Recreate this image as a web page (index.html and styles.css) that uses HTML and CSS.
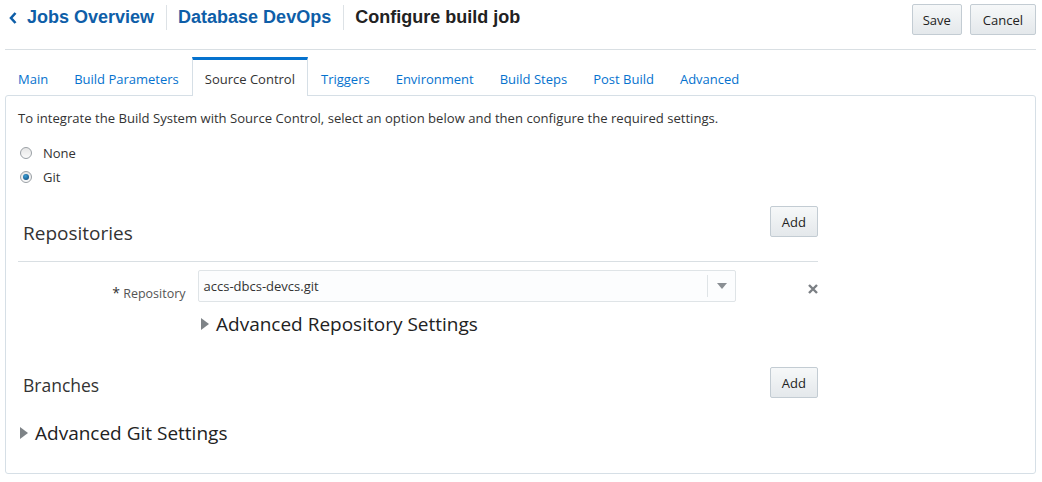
FILE: index.html
```html
<!DOCTYPE html>
<html>
<head>
<meta charset="utf-8">
<link rel="stylesheet" href="styles.css">
</head>
<body>
<div class="page">
  <header class="header">
    <nav class="crumbs">
      <a class="crumb link"><svg class="chev" width="10" height="14" viewBox="0 0 10 14"><path d="M7.5 2 L3 7 L7.5 12" fill="none" stroke="#0e5ea8" stroke-width="2.6"/></svg>Jobs Overview</a>
      <span class="sep"></span>
      <a class="crumb link">Database DevOps</a>
      <span class="sep"></span>
      <span class="crumb current">Configure build job</span>
    </nav>
    <div class="actions">
      <button class="btn save">Save</button>
      <button class="btn cancel">Cancel</button>
    </div>
  </header>

  <ul class="tabs">
    <li class="tab">Main</li>
    <li class="tab">Build Parameters</li>
    <li class="tab active">Source Control</li>
    <li class="tab">Triggers</li>
    <li class="tab">Environment</li>
    <li class="tab">Build Steps</li>
    <li class="tab">Post Build</li>
    <li class="tab">Advanced</li>
  </ul>

  <section class="panel">
    <p class="intro">To integrate the Build System with Source Control, select an option below and then configure the required settings.</p>
    <div class="radios">
      <label class="radio"><span class="dot"></span>None</label>
      <label class="radio"><span class="dot on"></span>Git</label>
    </div>

    <div class="section">
      <div class="section-head ruled">
        <h2 class="h-big">Repositories</h2>
        <button class="btn">Add</button>
      </div>
      <div class="repo-row">
        <label class="field-label"><span class="req">*</span> Repository</label>
        <div class="select">
          <span class="select-val">accs-dbcs-devcs.git</span>
          <span class="select-btn"><svg width="10" height="6" viewBox="0 0 10 6"><path d="M0 0 H10 L5 6 Z" fill="#8a8f94"/></svg></span>
        </div>
        <span class="remove"><svg width="10" height="10" viewBox="0 0 10 10"><path d="M1 1 L9 9 M9 1 L1 9" stroke="#7b7f84" stroke-width="2.4"/></svg></span>
      </div>
      <div class="disclosure indent"><span class="tri"></span>Advanced Repository Settings</div>
    </div>

    <div class="section">
      <div class="section-head branches">
        <h2 class="h-mid">Branches</h2>
        <button class="btn">Add</button>
      </div>
    </div>
    <div class="disclosure git"><span class="tri"></span>Advanced Git Settings</div>
  </section>
</div>
</body>
</html>
```

FILE: styles.css
```css
* { box-sizing: border-box; }
body {
  margin: 0;
  background: #fff;
  font-family: "Open Sans", "Noto Sans", sans-serif;
  color: #333;
}
.page { padding: 0 6px 0 5px; }

.header {
  display: flex;
  justify-content: space-between;
  align-items: flex-start;
  height: 50px;
  border-bottom: 1px solid #d9dfe3;
}
.crumbs {
  display: flex;
  align-items: center;
  height: 35px;
  padding-left: 3px;
  font-family: "Liberation Sans", Arial, sans-serif;
  font-weight: bold;
  font-size: 18px;
}
.crumb { display: flex; align-items: center; }
.link { color: #0e5ea8; }
.current { color: #222; }
.chev { margin-right: 9px; }
.sep {
  width: 1px;
  height: 25px;
  background: #dde2e6;
  margin: 0 11px 0 12px;
}
.actions { display: flex; gap: 8px; padding-top: 4px; }

.btn {
  font-family: "Open Sans", "Noto Sans", sans-serif;
  font-size: 13px;
  color: #222;
  height: 31px;
  padding: 0 11px;
  border: 1px solid #c3ccd3;
  border-radius: 2px;
  background: linear-gradient(#f6f8f9, #e4e8eb);
}
.btn.save { padding: 0 10px; }
.btn.cancel { padding: 0 12px; }

.tabs {
  list-style: none;
  margin: 7px 0 -1px 0;
  padding: 0;
  display: flex;
  position: relative;
  z-index: 1;
}
.tab {
  font-size: 13px;
  color: #0572ce;
  padding: 0 12px;
  height: 39px;
  line-height: 39px;
  border: 1px solid transparent;
  border-top: 3px solid transparent;
  border-bottom: none;
}
.tab.active {
  color: #333;
  background: #fff;
  border-color: #d6dfe6;
  border-top-color: #0572ce;
}

.panel {
  border: 1px solid #d6dfe6;
  border-radius: 3px;
  height: 379px;
  padding: 12px 12px;
}
.intro { margin: 0; font-size: 13.1px; line-height: 20px; color: #333; }
.radios { display: flex; flex-direction: column; gap: 6px; margin-top: 16px; }
.radio { display: flex; align-items: center; font-size: 13px; height: 18px; }
.dot {
  width: 12px; height: 12px;
  border-radius: 50%;
  border: 1px solid #9aa0a5;
  background: linear-gradient(#e6e6e6, #fafafa);
  margin: 0 11px 0 2px;
  display: inline-flex; align-items: center; justify-content: center;
}
.dot.on::after {
  content: "";
  width: 6px; height: 6px; border-radius: 50%;
  background: radial-gradient(circle at 40% 35%, #3ca0d8, #0a3f6e);
}

.section { width: 800px; }
.section-head {
  display: flex;
  justify-content: space-between;
  align-items: center;
  margin-top: 20px;
}
.section-head.ruled {
  align-items: flex-start;
  height: 56px;
  border-bottom: 1px solid #d9dfe3;
}
.section-head.ruled .h-big { margin-top: 14px; }
.section-head.branches { margin-top: 30px; align-items: flex-start; }
.section-head.branches .h-mid { margin-top: 6px; }
.h-big { margin: 0 0 0 5px; font-size: 19px; font-weight: normal; color: #333; }
.h-mid { margin: 0 0 0 5px; font-size: 17.5px; font-weight: normal; color: #333; }

.repo-row { display: flex; align-items: center; margin-top: 8px; height: 32px; }
.field-label {
  width: 168px; text-align: right; font-size: 12.5px; color: #555;
  margin-right: 12px; padding-top: 12px;
}
.req { font-size: 14px; color: #333; }
.select {
  width: 540px; height: 32px;
  border: 1px solid #dfe4e7;
  border-radius: 2px;
  background: #fcfdfe;
  display: flex; align-items: center;
}
.select-val { flex: 1; padding-left: 5px; font-size: 13px; color: #333; }
.select-btn {
  width: 28px; height: 22px;
  border-left: 1px solid #dfe4e7;
  display: flex; align-items: center; justify-content: center;
}
.remove { margin-left: 72px; padding-top: 4px; }

.disclosure {
  display: flex; align-items: center;
  font-size: 19px; color: #222;
}
.disclosure.indent { margin-left: 183px; margin-top: 9px; }
.disclosure.git { margin-left: 2px; margin-top: 22px; }
.tri {
  width: 0; height: 0;
  border-top: 6px solid transparent;
  border-bottom: 6px solid transparent;
  border-left: 8px solid #7e8387;
  margin-right: 7px;
}
```
